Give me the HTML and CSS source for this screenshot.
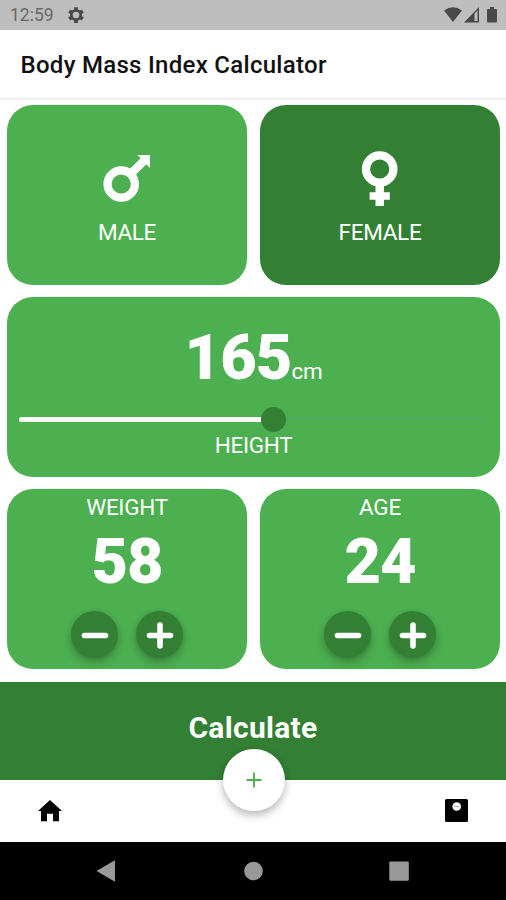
FILE: index.html
```html
<!DOCTYPE html>
<html lang="en">
<head>
<meta charset="utf-8">
<title>Body Mass Index Calculator</title>
<link rel="stylesheet" href="styles.css">
</head>
<body>
<div class="status">
  <span class="clock">12:59</span>
  <svg class="gear" width="18" height="18" viewBox="0 0 24 24"><g fill="none" stroke="#494949"><circle cx="12" cy="12" r="6.200" stroke-width="3.600"/><path stroke-width="5" d="M12 1.500v4M12 18.500v4M2.900 6.750l3.500 2M17.600 15.250l3.500 2M21.100 6.750l-3.500 2M6.400 15.250l-3.500 2"/></g></svg>
  <svg class="signals" width="54" height="16" viewBox="0 0 54 16">
    <path fill="#494949" d="M0 3.500Q9-3 18 3.500L9 15z"/>
    <path fill="#494949" d="M20 15.500 35 0v15.500zM30.500 6.500v7.500h3V3.500z" fill-rule="evenodd"/>
    <path fill="#494949" d="M46 0h4v2h2q1 0 1 1v11.500q0 1-1 1h-8q-1 0-1-1V3q0-1 1-1h2z"/>
  </svg>
</div>
<header class="appbar"><h1>Body Mass Index Calculator</h1></header>
<main class="grid">
  <section class="card gender">
    <svg width="60" height="60" viewBox="97 148 60 60"><circle cx="121.200" cy="184" r="13.700" fill="none" stroke="#fff" stroke-width="8.200"/><path fill="#fff" d="M137.300 155H150v13l-3.700-3.700-11.500 11.500-6-6L140.700 158.300z"/></svg>
    <span class="label">MALE</span>
  </section>
  <section class="card gender selected">
    <svg width="60" height="60" viewBox="350 148 60 60"><circle cx="379.700" cy="169" r="13.700" fill="none" stroke="#fff" stroke-width="8.200"/><path fill="#fff" d="M375.500 185h8.400v7.200h5.900v7.500h-5.900v6.200h-8.400v-6.200h-5.900v-7.500h5.900z"/></svg>
    <span class="label">FEMALE</span>
  </section>
  <section class="card height">
    <div class="reading"><span class="number">165</span><span class="unit">cm</span></div>
    <div class="slider"><div class="filled"></div><div class="thumb"></div><div class="rest"></div></div>
    <span class="label">HEIGHT</span>
  </section>
  <section class="card counter">
    <span class="label">WEIGHT</span>
    <span class="number">58</span>
    <div class="buttons">
      <button><svg width="28" height="28" viewBox="0 0 28 28"><path d="M3.500 14.500h21"/></svg></button>
      <button><svg width="28" height="28" viewBox="0 0 28 28"><path d="M3.500 14.500h21M14 4v21"/></svg></button>
    </div>
  </section>
  <section class="card counter">
    <span class="label">AGE</span>
    <span class="number">24</span>
    <div class="buttons">
      <button><svg width="28" height="28" viewBox="0 0 28 28"><path d="M3.500 14.500h21"/></svg></button>
      <button><svg width="28" height="28" viewBox="0 0 28 28"><path d="M3.500 14.500h21M14 4v21"/></svg></button>
    </div>
  </section>
</main>
<div class="calculate">Calculate</div>
<footer class="tabs">
  <svg width="24" height="22" viewBox="0 0 24 22"><path d="M12 0 24 11h-3v10.300h-6v-7.600H9v7.600H3V11H0z"/></svg>
  <div class="fab"><svg width="16" height="16" viewBox="0 0 16 16"><path d="M.5 8h15M8 .5v15" stroke="#4caf50" stroke-width="1.900"/></svg></div>
  <svg width="23" height="23" viewBox="0 0 23 23"><rect width="23" height="23" rx="1.500"/><circle cx="11.700" cy="7.500" r="4.300" fill="#fff"/><path d="M9.200 7.500h5" stroke="#aaa" stroke-width="1"/></svg>
</footer>
<nav class="system">
  <svg width="320" height="24" viewBox="93 859 320 24" fill="#999"><path d="M96.500 871 115 860.300v21.400z"/><circle cx="253.500" cy="871" r="9.300"/><rect x="389.300" y="861.500" width="19.500" height="19.300" rx="1"/></svg>
</nav>
</body>
</html>
```
FILE: styles.css
```css
* { box-sizing: border-box; }
body {
  margin: 0;
  width: 506px;
  height: 900px;
  overflow: hidden;
  background: #fff;
  font-family: Roboto, "Liberation Sans", sans-serif;
  display: flex;
  flex-direction: column;
}
svg { display: block; flex: none; }
.status {
  height: 30px;
  flex: none;
  background: #bebebe;
  display: flex;
  align-items: center;
  padding: 0 8px 0 10px;
}
.clock { font-size: 17.5px; color: #686868; width: 57px; }
.signals { margin-left: auto; }
.appbar {
  height: 70px;
  flex: none;
  padding: 0 20.5px;
  border-bottom: 2px solid #eee;
  display: flex;
  align-items: center;
}
h1 { margin: 2px 0 0; font-size: 24px; line-height: 28px; font-weight: 500; letter-spacing: .29px; color: #111; white-space: nowrap; }
.grid {
  height: 582px;
  flex: none;
  padding: 5.400px 6px 0 7px;
  display: grid;
  grid-template-columns: 240px 240px;
  grid-auto-rows: 179.200px;
  gap: 12.800px 13px;
}
.card {
  background: #4caf50;
  border-radius: 26px;
  color: #fff;
  display: flex;
  flex-direction: column;
  align-items: center;
}
.selected { background: #337f34; }
.gender { padding-top: 42.600px; }
.gender .label { margin-top: 11px; }
.label { font-size: 22.500px; line-height: 26px; letter-spacing: -.3px; }
.number { font-size: 63px; line-height: 64px; font-weight: 900; letter-spacing: -.9px; }
.height { grid-column: 1 / -1; padding-top: 29px; }
.reading { display: flex; align-items: baseline; height: 64px; }
.unit { font-size: 22.500px; letter-spacing: -.3px; }
.slider { width: 470px; height: 26px; margin-top: 16px; display: flex; align-items: center; }
.filled { width: 242px; height: 4.500px; border-radius: 3px 0 0 3px; background: #fff; }
.thumb { width: 25px; height: 25px; border-radius: 50%; background: #337f34; }
.rest { width: 202px; height: 2px; background: #4aab63; }
.counter { padding-top: 5px; }
.counter .number { margin-top: 10px; }
.buttons { display: flex; gap: 18px; margin-top: 17px; }
button {
  width: 47px;
  height: 47px;
  padding: 0;
  border: 0;
  border-radius: 50%;
  background: #337f34;
  display: flex;
  align-items: center;
  justify-content: center;
  box-shadow: 0 5px 8px rgba(0, 0, 0, .2), 0 1px 5px rgba(0, 0, 0, .1);
}
button svg { fill: none; stroke: #fff; stroke-width: 5.600; stroke-linecap: round; }
.calculate {
  height: 97.500px;
  flex: none;
  padding-top: 28px;
  background: #337f34;
  color: #fff;
  text-align: center;
  font-size: 30px;
  line-height: 36px;
  font-weight: 700;
  letter-spacing: .3px;
}
.tabs {
  height: 62px;
  flex: none;
  padding: 0 38px;
  display: flex;
  align-items: center;
  justify-content: space-between;
}
.fab {
  width: 62px;
  height: 62px;
  margin-top: -61px;
  border-radius: 50%;
  background: #fff;
  display: flex;
  align-items: center;
  justify-content: center;
  box-shadow: 0 5px 8px rgba(0, 0, 0, .22), 0 1px 8px rgba(0, 0, 0, .08);
}
.system { flex: 1; background: #000; display: flex; align-items: center; justify-content: center; }
```
